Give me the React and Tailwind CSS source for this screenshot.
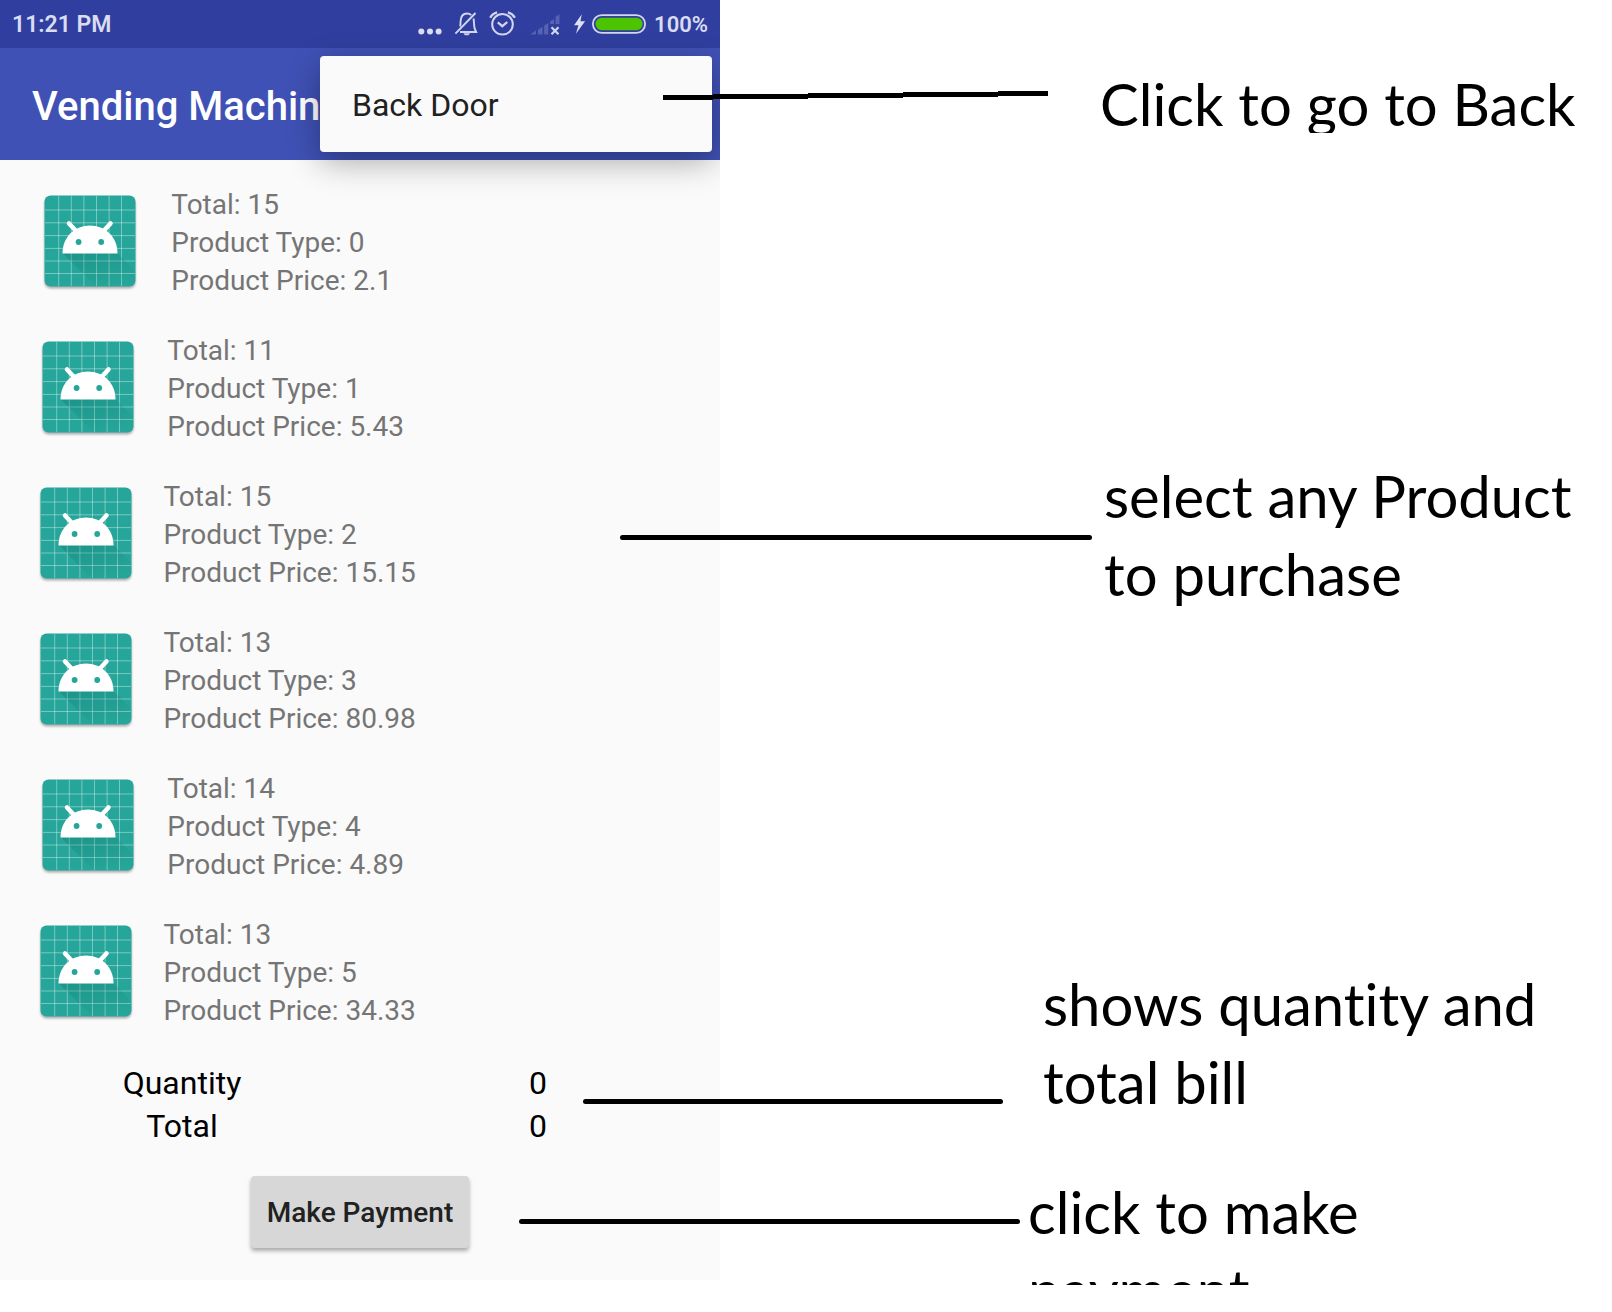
const products = [
  { total: 15, type: 0, price: "2.1" },
  { total: 11, type: 1, price: "5.43" },
  { total: 15, type: 2, price: "15.15" },
  { total: 13, type: 3, price: "80.98" },
  { total: 14, type: 4, price: "4.89" },
  { total: 13, type: 5, price: "34.33" },
];

function MoreDots() {
  return (
    <svg className="h-12 w-8" viewBox="418 0 32 48" fill="#dadcf0" aria-hidden="true">
      <circle cx="423.3" cy="31.6" r="3" />
      <circle cx="432" cy="31.6" r="3" />
      <circle cx="440.6" cy="31.6" r="3" />
    </svg>
  );
}

function MutedBell() {
  return (
    <svg className="h-12 w-9" viewBox="450 0 36 48" fill="none" stroke="#d3d6ee" strokeWidth="1.9" aria-hidden="true">
      <path d="M462.2 26.500c.3-2 .3-3.500.400-5.500.3-4.500 2.700-7.500 6.400-7.500 1.700 0 3.200.6 4.300 1.600" />
      <path d="M475.600 18.500c.5 3.500.200 7.500 1.200 10.500l1.400 3H462" />
      <path d="M457.400 33.700 477.500 13" />
      <path d="M465.300 33.200h6.900l-1.700 2h-3.500z" fill="#d3d6ee" stroke="none" />
    </svg>
  );
}

function AlarmClock() {
  return (
    <svg className="h-12 w-[38px]" viewBox="486 0 38 48" fill="none" stroke="#d3d6ee" strokeWidth="2" aria-hidden="true">
      <circle cx="504.500" cy="24.300" r="10.300" />
      <path d="m499.800 22.400 4.500 3.800 5-4.200" strokeWidth="2.200" />
      <path d="M492.300 17.800c1.200-2.700 3.600-4.700 6.800-5.500M509.900 12.300c3.200.8 5.600 2.800 6.900 5.500" strokeWidth="2.400" />
    </svg>
  );
}

function NoSignal() {
  return (
    <svg className="h-12 w-[46px]" viewBox="524 0 46 48" aria-hidden="true">
      <g fill="#5663b3">
        <path d="m532 34.600 6-4v4zM540 29.500l4.500-2.500v7.600H540zM546.200 25.500l4-2.600v11.700h-4zM552 21.500l4-2.500v5h-4zM557.500 17l4-2.800V24h-4z" />
      </g>
      <path d="m553.500 27.300 7 7m0-7-7 7" stroke="#d3d6ee" strokeWidth="2.200" fill="none" />
    </svg>
  );
}

function Battery() {
  return (
    <svg className="h-12 w-20" viewBox="570 0 80 48" aria-hidden="true">
      <path d="m583.800 14.300-7.700 11h4.400l-2.600 8.400 9.200-12.400h-4.700z" fill="#dfe1f3" />
      <rect x="594.900" y="15.100" width="52.200" height="17.800" rx="8.900" fill="none" stroke="#d3d6ee" strokeWidth="1.800" />
      <rect x="597.600" y="17.800" width="47" height="12.500" rx="6.200" fill="#4cc402" />
    </svg>
  );
}

function AndroidIcon() {
  return (
    <svg className="size-24 drop-shadow-[0_2px_1px_rgba(0,0,0,0.3)]" viewBox="0 0 96 96" aria-hidden="true">
      <defs>
        <linearGradient id="cast-shadow" x1="0.2" y1="0" x2="0.8" y2="1">
          <stop offset="0" stopColor="#00695c" stopOpacity=".26" />
          <stop offset="1" stopColor="#00695c" stopOpacity="0" />
        </linearGradient>
      </defs>
      <rect x="2.500" y="2.500" width="91" height="91" rx="6" fill="#26a69a" />
      <path
        d="M16.700 3v90M29.300 3v90M41.900 3v90M54.500 3v90M67.100 3v90M79.500 3v90M3 17h90M3 29.800h90M3 42.600h90M3 55.400h90M3 68h90M3 80.500h90"
        stroke="#fff"
        strokeOpacity=".38"
      />
      <path d="M20.500 60 75.500 60 93 77.500V88a5.500 5.500 0 0 1-5.500 5.500H54z" fill="url(#cast-shadow)" />
      <path d="M20.500 60.500C20.500 43.500 33 32.500 48 32.500S75.500 43.500 75.500 60.500z" fill="#fff" />
      <path d="m27 30.500 8 8.500M68.500 30.500l-8 8.500" stroke="#fff" strokeWidth="4.500" strokeLinecap="round" />
      <circle cx="36.600" cy="49" r="2.900" fill="#26a69a" />
      <circle cx="59.200" cy="49" r="2.900" fill="#26a69a" />
    </svg>
  );
}

function Phone() {
  return (
    <section className="relative h-[1280px] overflow-hidden bg-[#fafafa] font-['Roboto',sans-serif]">
      <div className="flex h-12 items-center justify-between bg-[#303f9f] px-3 text-[#dadcf0]">
        <span className="pt-0.5 text-[23px] leading-12 font-semibold">11:21 PM</span>
        <div className="flex items-center">
          <MoreDots />
          <MutedBell />
          <AlarmClock />
          <NoSignal />
          <Battery />
          <span className="ml-1.5 pt-0.5 text-[22px] leading-12 font-semibold">100%</span>
        </div>
      </div>
      <header className="flex h-28 items-center bg-[#3f51b5] px-8 pt-1.5">
        <h1 className="text-[40px] leading-12 font-medium whitespace-nowrap text-white">Vending Machine</h1>
      </header>
      <div
        role="menu"
        className="absolute top-14 right-2 w-[392px] rounded bg-[#fafafa] shadow-[0_10px_32px_rgba(0,0,0,0.32)]"
      >
        <button role="menuitem" type="button" className="h-24 w-full px-8 pt-0.5 text-left text-[32px] text-[#212121]">
          Back Door
        </button>
      </div>

      <ul className="flex flex-col gap-8 pt-[26px] pl-2.5">
        {products.map((p) => (
          <li key={p.type} className="flex w-[572px] items-start">
            <div className="flex shrink-0 grow basis-24 justify-center pt-[7px]">
              <AndroidIcon />
            </div>
            <div className="grow-3 pl-0.5 text-[28px] leading-[38px] text-[#757575]">
              <p>Total: {p.total}</p>
              <p>Product Type: {p.type}</p>
              <p>Product Price: {p.price}</p>
            </div>
          </li>
        ))}
      </ul>

      <dl className="mt-8 grid grid-cols-2 px-1 text-center text-[32px] leading-[43px] text-black">
        <dt>Quantity</dt>
        <dd>0</dd>
        <dt>Total</dt>
        <dd>0</dd>
      </dl>
      <div className="mt-7 flex justify-center">
        <button
          type="button"
          className="h-[72px] rounded bg-[#d6d7d6] px-4 pt-0.5 text-[28px] font-medium text-[#212121] shadow-[0_3px_4px_rgba(0,0,0,0.32)]"
        >
          Make Payment
        </button>
      </div>
    </section>
  );
}

const textStyle = "shrink-0 overflow-hidden whitespace-nowrap";
const ruleStyle = "h-[5px] shrink-0 rounded-sm bg-black";

function Notes() {
  return (
    <aside className="relative z-10 flex flex-col pt-[65px] font-['Lato',sans-serif] text-[58px] leading-[78px] text-black [font-variant-ligatures:none]">
      <div className="-ml-[57px] flex items-start">
        <svg className="mt-[26px] h-[9px] w-[385px] shrink-0" viewBox="0 0 385 9" aria-hidden="true">
          <path d="M0 4h50V3h95V2h95V1h95V0h50v5h-50v1h-95v1h-95v1H50v1H0z" />
        </svg>
        <p className={`ml-[52px] h-[68px] ${textStyle}`}>Click to go to Back</p>
      </div>
      <div className="mt-[324px] -ml-[100px] flex items-start">
        <span className={`mt-[78px] w-[472px] ${ruleStyle}`} />
        <p className={`ml-3 ${textStyle}`}>
          select any Product
          <br />
          to purchase
        </p>
      </div>
      <div className="mt-[352px] -ml-[137px] flex items-start">
        <span className={`mt-[134px] w-[420px] ${ruleStyle}`} />
        <p className={`ml-10 ${textStyle}`}>
          shows quantity and
          <br />
          total bill
        </p>
      </div>
      <div className="mt-[52px] -ml-[201px] flex items-start">
        <span className={`mt-[46px] w-[501px] ${ruleStyle}`} />
        <p className={`ml-2 h-28 ${textStyle}`}>
          click to make
          <br />
          payment
        </p>
      </div>
    </aside>
  );
}

export default function App() {
  return (
    <main className="grid min-h-screen grid-cols-[minmax(0,720fr)_minmax(0,892fr)] items-start overflow-hidden bg-white">
      <Phone />
      <Notes />
    </main>
  );
}
